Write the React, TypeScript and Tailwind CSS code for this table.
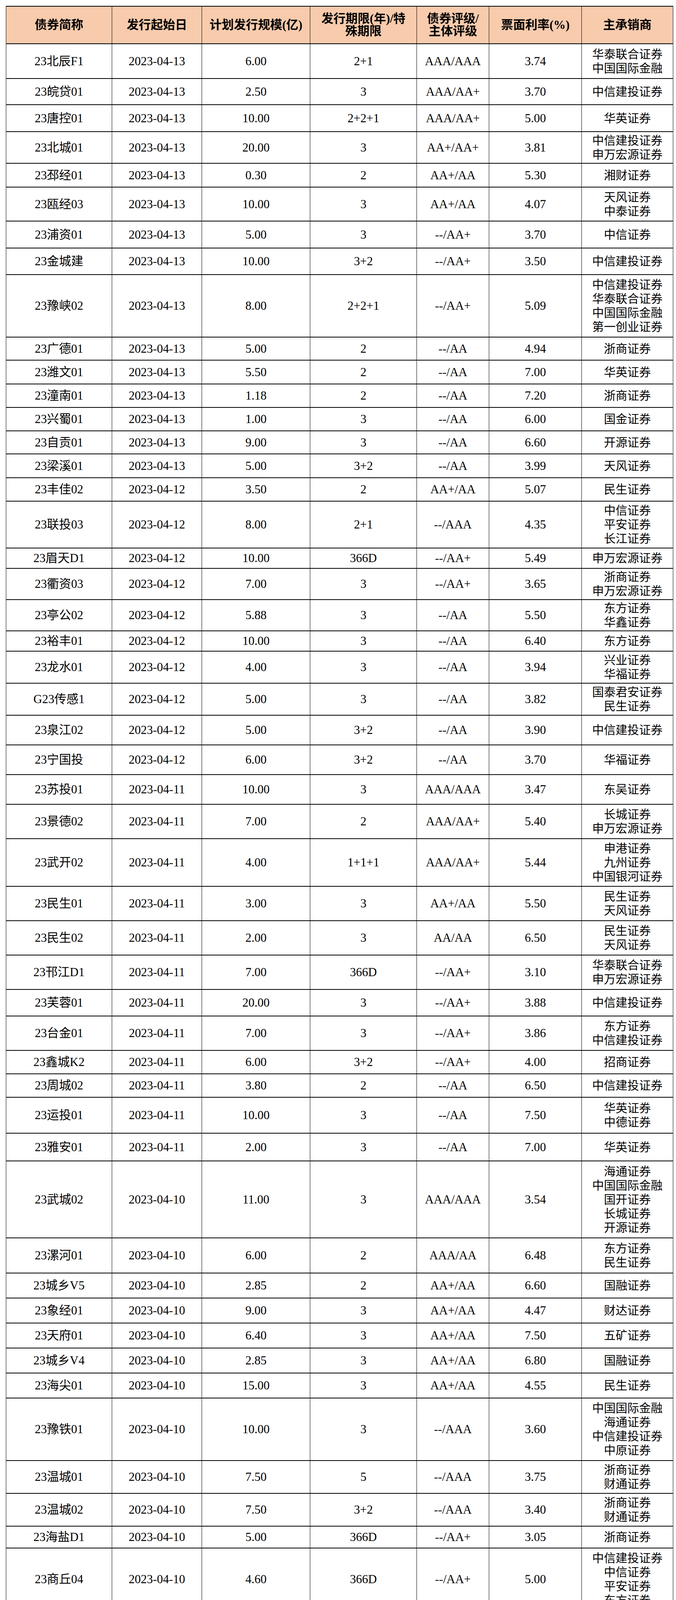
import React from 'react';

type Bond = {
  name: string;
  date: string;
  size: string;
  term: string;
  rating: string;
  rate: string;
  brokers: string[];
  h: string;
};

const bonds: Bond[] = [
  { name: '23北辰F1', date: '2023-04-13', size: '6.00', term: '2+1', rating: 'AAA/AAA', rate: '3.74', brokers: ['华泰联合证券', '中国国际金融'], h: 'h-[89px]' },
  { name: '23皖贷01', date: '2023-04-13', size: '2.50', term: '3', rating: 'AAA/AA+', rate: '3.70', brokers: ['中信建投证券'], h: 'h-[67px]' },
  { name: '23唐控01', date: '2023-04-13', size: '10.00', term: '2+2+1', rating: 'AAA/AA+', rate: '5.00', brokers: ['华英证券'], h: 'h-[69px]' },
  { name: '23北城01', date: '2023-04-13', size: '20.00', term: '3', rating: 'AA+/AA+', rate: '3.81', brokers: ['中信建投证券', '申万宏源证券'], h: 'h-[81px]' },
  { name: '23邳经01', date: '2023-04-13', size: '0.30', term: '2', rating: 'AA+/AA', rate: '5.30', brokers: ['湘财证券'], h: 'h-[61px]' },
  { name: '23瓯经03', date: '2023-04-13', size: '10.00', term: '3', rating: 'AA+/AA', rate: '4.07', brokers: ['天风证券', '中泰证券'], h: 'h-[87px]' },
  { name: '23浦资01', date: '2023-04-13', size: '5.00', term: '3', rating: '--/AA+', rate: '3.70', brokers: ['中信证券'], h: 'h-[69px]' },
  { name: '23金城建', date: '2023-04-13', size: '10.00', term: '3+2', rating: '--/AA+', rate: '3.50', brokers: ['中信建投证券'], h: 'h-[68px]' },
  { name: '23豫峡02', date: '2023-04-13', size: '8.00', term: '2+2+1', rating: '--/AA+', rate: '5.09', brokers: ['中信建投证券', '华泰联合证券', '中国国际金融', '第一创业证券'], h: 'h-[160px]' },
  { name: '23广德01', date: '2023-04-13', size: '5.00', term: '2', rating: '--/AA', rate: '4.94', brokers: ['浙商证券'], h: 'h-[59px]' },
  { name: '23潍文01', date: '2023-04-13', size: '5.50', term: '2', rating: '--/AA', rate: '7.00', brokers: ['华英证券'], h: 'h-[61px]' },
  { name: '23潼南01', date: '2023-04-13', size: '1.18', term: '2', rating: '--/AA', rate: '7.20', brokers: ['浙商证券'], h: 'h-[60px]' },
  { name: '23兴蜀01', date: '2023-04-13', size: '1.00', term: '3', rating: '--/AA', rate: '6.00', brokers: ['国金证券'], h: 'h-[60px]' },
  { name: '23自贡01', date: '2023-04-13', size: '9.00', term: '3', rating: '--/AA', rate: '6.60', brokers: ['开源证券'], h: 'h-[59px]' },
  { name: '23梁溪01', date: '2023-04-13', size: '5.00', term: '3+2', rating: '--/AA', rate: '3.99', brokers: ['天风证券'], h: 'h-[61px]' },
  { name: '23丰佳02', date: '2023-04-12', size: '3.50', term: '2', rating: 'AA+/AA', rate: '5.07', brokers: ['民生证券'], h: 'h-[60px]' },
  { name: '23联投03', date: '2023-04-12', size: '8.00', term: '2+1', rating: '--/AAA', rate: '4.35', brokers: ['中信证券', '平安证券', '长江证券'], h: 'h-[120px]' },
  { name: '23眉天D1', date: '2023-04-12', size: '10.00', term: '366D', rating: '--/AA+', rate: '5.49', brokers: ['申万宏源证券'], h: 'h-[52px]' },
  { name: '23衢资03', date: '2023-04-12', size: '7.00', term: '3', rating: '--/AA+', rate: '3.65', brokers: ['浙商证券', '申万宏源证券'], h: 'h-[80px]' },
  { name: '23亭公02', date: '2023-04-12', size: '5.88', term: '3', rating: '--/AA', rate: '5.50', brokers: ['东方证券', '华鑫证券'], h: 'h-[80px]' },
  { name: '23裕丰01', date: '2023-04-12', size: '10.00', term: '3', rating: '--/AA', rate: '6.40', brokers: ['东方证券'], h: 'h-[52px]' },
  { name: '23龙水01', date: '2023-04-12', size: '4.00', term: '3', rating: '--/AA', rate: '3.94', brokers: ['兴业证券', '华福证券'], h: 'h-[82px]' },
  { name: 'G23传感1', date: '2023-04-12', size: '5.00', term: '3', rating: '--/AA', rate: '3.82', brokers: ['国泰君安证券', '民生证券'], h: 'h-[82px]' },
  { name: '23泉江02', date: '2023-04-12', size: '5.00', term: '3+2', rating: '--/AA', rate: '3.90', brokers: ['中信建投证券'], h: 'h-[76px]' },
  { name: '23宁国投', date: '2023-04-12', size: '6.00', term: '3+2', rating: '--/AA', rate: '3.70', brokers: ['华福证券'], h: 'h-[76px]' },
  { name: '23苏投01', date: '2023-04-11', size: '10.00', term: '3', rating: 'AAA/AAA', rate: '3.47', brokers: ['东吴证券'], h: 'h-[76px]' },
  { name: '23景德02', date: '2023-04-11', size: '7.00', term: '2', rating: 'AAA/AA+', rate: '5.40', brokers: ['长城证券', '申万宏源证券'], h: 'h-[88px]' },
  { name: '23武开02', date: '2023-04-11', size: '4.00', term: '1+1+1', rating: 'AAA/AA+', rate: '5.44', brokers: ['申港证券', '九州证券', '中国银河证券'], h: 'h-[122px]' },
  { name: '23民生01', date: '2023-04-11', size: '3.00', term: '3', rating: 'AA+/AA', rate: '5.50', brokers: ['民生证券', '天风证券'], h: 'h-[88px]' },
  { name: '23民生02', date: '2023-04-11', size: '2.00', term: '3', rating: 'AA/AA', rate: '6.50', brokers: ['民生证券', '天风证券'], h: 'h-[88px]' },
  { name: '23邗江D1', date: '2023-04-11', size: '7.00', term: '366D', rating: '--/AA+', rate: '3.10', brokers: ['华泰联合证券', '申万宏源证券'], h: 'h-[88px]' },
  { name: '23芙蓉01', date: '2023-04-11', size: '20.00', term: '3', rating: '--/AA+', rate: '3.88', brokers: ['中信建投证券'], h: 'h-[68px]' },
  { name: '23台金01', date: '2023-04-11', size: '7.00', term: '3', rating: '--/AA+', rate: '3.86', brokers: ['东方证券', '中信建投证券'], h: 'h-[88px]' },
  { name: '23鑫城K2', date: '2023-04-11', size: '6.00', term: '3+2', rating: '--/AA+', rate: '4.00', brokers: ['招商证券'], h: 'h-[60px]' },
  { name: '23周城02', date: '2023-04-11', size: '3.80', term: '2', rating: '--/AA', rate: '6.50', brokers: ['中信建投证券'], h: 'h-[60px]' },
  { name: '23运投01', date: '2023-04-11', size: '10.00', term: '3', rating: '--/AA', rate: '7.50', brokers: ['华英证券', '中德证券'], h: 'h-[92px]' },
  { name: '23雅安01', date: '2023-04-11', size: '2.00', term: '3', rating: '--/AA', rate: '7.00', brokers: ['华英证券'], h: 'h-[71px]' },
  { name: '23武城02', date: '2023-04-10', size: '11.00', term: '3', rating: 'AAA/AAA', rate: '3.54', brokers: ['海通证券', '中国国际金融', '国开证券', '长城证券', '开源证券'], h: 'h-[197px]' },
  { name: '23漯河01', date: '2023-04-10', size: '6.00', term: '2', rating: 'AAA/AA', rate: '6.48', brokers: ['东方证券', '民生证券'], h: 'h-[90px]' },
  { name: '23城乡V5', date: '2023-04-10', size: '2.85', term: '2', rating: 'AA+/AA', rate: '6.60', brokers: ['国融证券'], h: 'h-[64px]' },
  { name: '23象经01', date: '2023-04-10', size: '9.00', term: '3', rating: 'AA+/AA', rate: '4.47', brokers: ['财达证券'], h: 'h-[64px]' },
  { name: '23天府01', date: '2023-04-10', size: '6.40', term: '3', rating: 'AA+/AA', rate: '7.50', brokers: ['五矿证券'], h: 'h-[64px]' },
  { name: '23城乡V4', date: '2023-04-10', size: '2.85', term: '3', rating: 'AA+/AA', rate: '6.80', brokers: ['国融证券'], h: 'h-[64px]' },
  { name: '23海尖01', date: '2023-04-10', size: '15.00', term: '3', rating: 'AA+/AA', rate: '4.55', brokers: ['民生证券'], h: 'h-[64px]' },
  { name: '23豫铁01', date: '2023-04-10', size: '10.00', term: '3', rating: '--/AAA', rate: '3.60', brokers: ['中国国际金融', '海通证券', '中信建投证券', '中原证券'], h: 'h-[160px]' },
  { name: '23温城01', date: '2023-04-10', size: '7.50', term: '5', rating: '--/AAA', rate: '3.75', brokers: ['浙商证券', '财通证券'], h: 'h-[84px]' },
  { name: '23温城02', date: '2023-04-10', size: '7.50', term: '3+2', rating: '--/AAA', rate: '3.40', brokers: ['浙商证券', '财通证券'], h: 'h-[84px]' },
  { name: '23海盐D1', date: '2023-04-10', size: '5.00', term: '366D', rating: '--/AA+', rate: '3.05', brokers: ['浙商证券'], h: 'h-[56px]' },
  { name: '23商丘04', date: '2023-04-10', size: '4.60', term: '366D', rating: '--/AA+', rate: '5.00', brokers: ['中信建投证券', '中信证券', '平安证券', '东方证券'], h: 'h-[159px]' },
  { name: '23嘉秀03', date: '2023-04-10', size: '4.00', term: '3', rating: '--/AA+', rate: '3.88', brokers: ['中信建投证券', '五矿证券'], h: 'h-[89px]' },
  { name: '23常新02', date: '2023-04-10', size: '10.00', term: '3', rating: '--/AA+', rate: '4.00', brokers: ['国泰君安证券', '华泰联合证券', '中国国际金融'], h: 'h-[122px]' },
  { name: '23芜建02', date: '2023-04-10', size: '5.00', term: '3', rating: '--/AA+', rate: '3.63', brokers: ['中国国际金融'], h: 'h-[56px]' },
  { name: '23太仓01', date: '2023-04-10', size: '5.00', term: '3', rating: '--/AA+', rate: '3.55', brokers: ['东吴证券', '华安证券'], h: 'h-[88px]' },
  { name: '23穗开02', date: '2023-04-10', size: '4.00', term: '3', rating: '--/AA+', rate: '3.60', brokers: ['万联证券', '国泰君安证券'], h: 'h-[88px]' },
  { name: '23新开01', date: '2023-04-10', size: '13.00', term: '2+2+1', rating: '--/AA+', rate: '5.30', brokers: ['开源证券'], h: 'h-[56px]' },
  { name: '23恒投02', date: '2023-04-10', size: '1.00', term: '2', rating: '--/AA', rate: '7.00', brokers: ['安信证券', '中国银河证券'], h: 'h-[80px]' },
  { name: '23宁海01', date: '2023-04-10', size: '5.00', term: '3', rating: '--/AA', rate: '4.25', brokers: ['东海证券'], h: 'h-[58px]' },
  { name: '23焦发01', date: '2023-04-10', size: '5.00', term: '1+1+1', rating: '--/AA', rate: '6.18', brokers: ['江海证券'], h: 'h-[58px]' },
  { name: '23东交01', date: '2023-04-10', size: '10.00', term: '3+2', rating: '--/AA', rate: '3.90', brokers: ['浙商证券'], h: 'h-[59px]' },
  { name: '23义建01', date: '2023-04-10', size: '6.00', term: '3+2', rating: '--/AA', rate: '4.00', brokers: ['中信建投证券', '财通证券'], h: 'h-[89px]' },
];

// column widths copied off the sheet: 272 / 230 / 277 / 273 / 185 / 237 / 233
const cols = 'grid grid-cols-[271px_230px_277px_273px_185px_237px_233px]';
const cell = 'flex items-center justify-center text-center border-r border-black overflow-hidden';

const App = () => {
  return (
    <div className="h-[4982px] overflow-hidden bg-white pt-[15px] pl-[15px] text-black font-['Liberation_Serif','Noto_Sans_CJK_SC',serif]">
      <div className="w-[1708px] border-l border-r border-t-2 border-black">
        {/* header */}
        <div className={`${cols} h-[96px] border-b-2 border-black bg-[#f8cbad] text-[31px] font-bold`}>
          <div className={cell}>债券简称</div>
          <div className={cell}>发行起始日</div>
          <div className={cell}>计划发行规模(亿)</div>
          <div className={`${cell} flex-col leading-[32px]`}>
            <span>发行期限(年)/特</span>
            <span>殊期限</span>
          </div>
          <div className={`${cell} flex-col leading-[32px]`}>
            <span>债券评级/</span>
            <span>主体评级</span>
          </div>
          <div className={cell}>票面利率(%)</div>
          <div className="flex items-center justify-center text-center">主承销商</div>
        </div>

        {bonds.map((b) => (
          <div key={b.name} className={`${cols} ${b.h} border-b-2 border-black text-[31px] leading-[36px]`}>
            <div className={cell}>{b.name}</div>
            <div className={cell}>{b.date}</div>
            <div className={cell}>{b.size}</div>
            <div className={cell}>{b.term}</div>
            <div className={cell}>{b.rating}</div>
            <div className={cell}>{b.rate}</div>
            <div className="flex flex-col items-center justify-center overflow-hidden text-center text-[30px] leading-[36px]">
              {b.brokers.map((br, i) => (
                <span key={i} className="block h-[36px]">{br}</span>
              ))}
            </div>
          </div>
        ))}
      </div>
    </div>
  );
};

export default App;
